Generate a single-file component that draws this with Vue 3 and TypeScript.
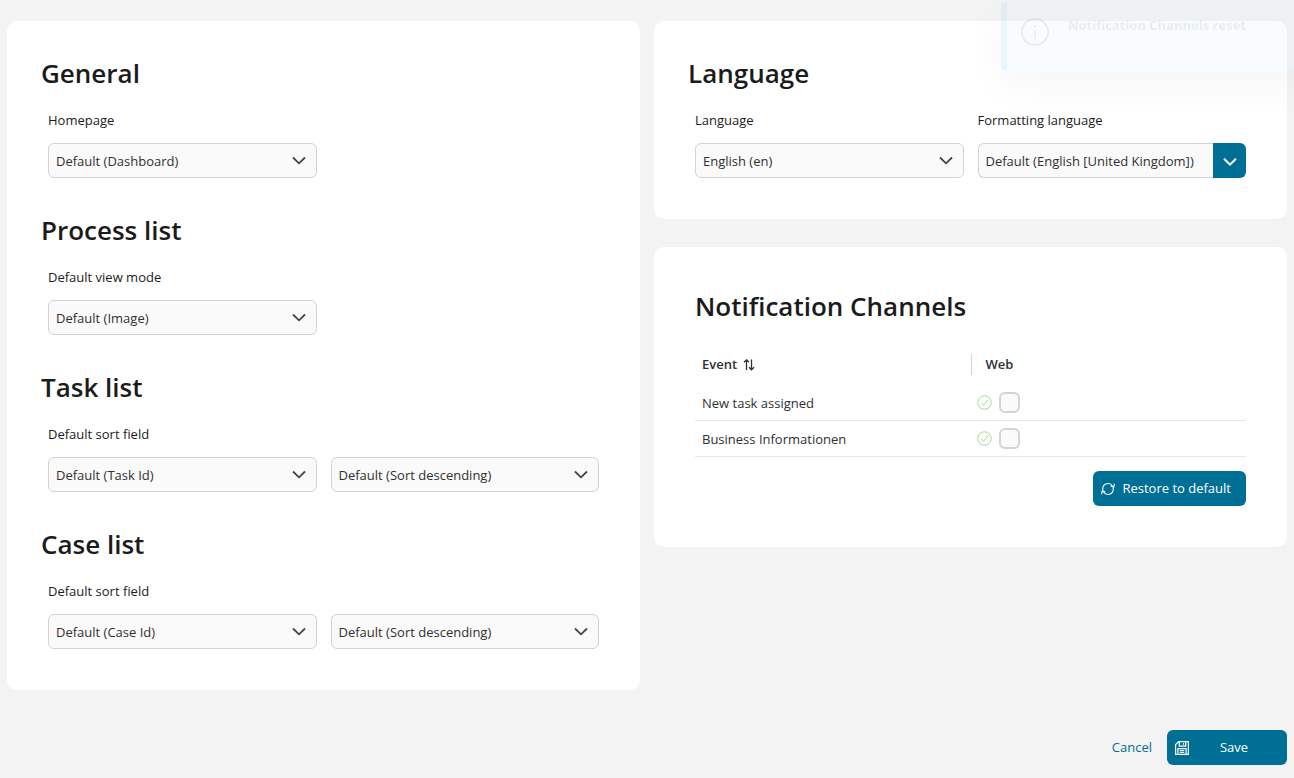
<script setup lang="ts">
import { ref } from 'vue'

interface Field {
  id: string
  label: string
  value: string
}
interface Section {
  title: string
  label: string
  fields: Field[]
}
interface Channel {
  id: string
  event: string
  web: boolean
}

const sections = ref<Section[]>([
  {
    title: 'General',
    label: 'Homepage',
    fields: [{ id: 'homepage', label: 'Homepage', value: 'Default (Dashboard)' }],
  },
  {
    title: 'Process list',
    label: 'Default view mode',
    fields: [{ id: 'view-mode', label: 'Default view mode', value: 'Default (Image)' }],
  },
  {
    title: 'Task list',
    label: 'Default sort field',
    fields: [
      { id: 'task-sort', label: 'Default sort field', value: 'Default (Task Id)' },
      { id: 'task-dir', label: 'Task sort direction', value: 'Default (Sort descending)' },
    ],
  },
  {
    title: 'Case list',
    label: 'Default sort field',
    fields: [
      { id: 'case-sort', label: 'Default sort field', value: 'Default (Case Id)' },
      { id: 'case-dir', label: 'Case sort direction', value: 'Default (Sort descending)' },
    ],
  },
])

const language = ref('English (en)')
const formatting = ref('Default (English [United Kingdom])')
const channels = ref<Channel[]>([
  { id: 'new-task', event: 'New task assigned', web: false },
  { id: 'business', event: 'Business Informationen', web: false },
])

function restore(): void {
  channels.value.forEach((c) => (c.web = false))
}
</script>

<template>
  <form class="page" @submit.prevent>
    <div class="columns">
      <main class="card">
        <section v-for="s in sections" :key="s.title" class="section">
          <h2>{{ s.title }}</h2>
          <div class="fields">
            <label class="label" :for="s.fields[0].id">{{ s.label }}</label>
            <div v-for="f in s.fields" :key="f.id" class="select">
              <select :id="f.id" v-model="f.value" :aria-label="f.label">
                <option>{{ f.value }}</option>
              </select>
              <svg class="chevron" viewBox="0 0 14 14" aria-hidden="true"><path d="M1 3.500 7 9.300l6-5.800" /></svg>
            </div>
          </div>
        </section>
      </main>

      <div class="side">
        <section class="card">
          <h2>Language</h2>
          <div class="fields">
            <label class="label" for="language">Language</label>
            <label class="label" for="formatting">Formatting language</label>
            <div class="select">
              <select id="language" v-model="language">
                <option>English (en)</option>
              </select>
              <svg class="chevron" viewBox="0 0 14 14" aria-hidden="true"><path d="M1 3.500 7 9.300l6-5.800" /></svg>
            </div>
            <div class="combo">
              <input id="formatting" v-model="formatting" type="text" />
              <button type="button" aria-label="Show formatting languages">
                <svg class="icon" viewBox="0 0 14 14" aria-hidden="true"><path d="M1 4.800 7 10.600l6-5.800" stroke-width="2" /></svg>
              </button>
            </div>
          </div>
        </section>

        <section class="card channels">
          <h2>Notification Channels</h2>
          <table>
            <thead>
              <tr>
                <th scope="col">
                  <span class="sort">Event
                    <svg class="icon" viewBox="0 0 14 14" aria-hidden="true"><path d="M4.500 12V2M2 4.300 4.500 1.800 7 4.300M9.500 1.500v10.200M7 9.300l2.500 2.500 2.500-2.500" stroke-width="1.300" /></svg>
                  </span>
                </th>
                <th scope="col"><span class="divided">Web</span></th>
              </tr>
            </thead>
            <tbody>
              <tr v-for="c in channels" :key="c.id">
                <td><label :for="c.id">{{ c.event }}</label></td>
                <td class="web">
                  <div class="state">
                    <svg class="ok" viewBox="0 0 16 16" aria-hidden="true"><circle cx="8" cy="8" r="7.200" /><path d="m4.500 8.600 2.400 2.400 4.900-6" /></svg>
                    <input :id="c.id" v-model="c.web" type="checkbox" />
                  </div>
                </td>
              </tr>
            </tbody>
          </table>
          <div class="actions">
            <button class="primary" type="button" @click="restore">
              <svg class="icon" viewBox="0 0 14 14" aria-hidden="true"><path d="M1.800 9.500V7A5.200 5.200 0 0 1 11.500 4.200M12.200 4.500V7A5.200 5.200 0 0 1 2.500 9.800M13.300 1.700 12.900 4.800 9.800 4.300M.7 12.300l.4-3.100 3.100.5" stroke-width="1.100" /></svg>
              <span>Restore to default</span>
            </button>
          </div>
        </section>
      </div>
    </div>

    <footer class="footer">
      <a href="#">Cancel</a>
      <button class="primary save" type="submit">
        <svg class="icon" viewBox="0 0 14 14" aria-hidden="true"><path d="M.6 3.600 3.600.6h9.800v12.800H.6zM4.300.8v4.400h6.400V.8M8.500 2v1.800M2.900 13.200V7.700h8.200v5.500M4.800 9.600h4.400M4.800 11.500h4.400" stroke-width="1.200" /></svg>
        <span>Save</span>
      </button>
    </footer>

    <div class="toast" role="status">
      <svg viewBox="0 0 28 28" aria-hidden="true"><circle cx="14" cy="14" r="13" /><path d="M14 12v9M14 7v2.200" /></svg>
      <strong>Notification Channels reset</strong>
    </div>
  </form>
</template>

<style>
body {
  background: #f3f3f3;
}
</style>

<style scoped>
* {
  box-sizing: border-box;
}
.page {
  padding: 21px 7px 13px;
  font: 13px/19px 'Open Sans', 'Noto Sans', sans-serif;
  color: #1b1b1b;
}
.columns {
  display: grid;
  grid-template-columns: 1fr 1fr;
  gap: 14px;
  align-items: start;
}
.side {
  display: grid;
  gap: 28px;
}
.card {
  padding: 34px 34px 41px;
  background: #fff;
  border-radius: 10px;
}
.card.channels {
  padding: 41px;
}
h2 {
  margin: 0;
  font-size: 26px;
  line-height: 37px;
  font-weight: 600;
}
.section + .section {
  margin-top: 34px;
}
.fields {
  display: grid;
  grid-template-columns: 1fr 1fr;
  column-gap: 14px;
  row-gap: 13px;
  padding: 19px 7px 0;
}
.section .label {
  grid-column: 1 / -1;
}
.select {
  display: grid;
  align-items: center;
}
select,
.combo input {
  width: 100%;
  height: 35px;
  padding: 1px 7px 0;
  appearance: none;
  border: 1px solid #d3d3d6;
  border-radius: 6px;
  background: #fafafa;
  color: #303030;
  font: inherit;
}
.select > * {
  grid-area: 1 / 1;
}
svg {
  fill: none;
  stroke: currentColor;
}
.icon,
.chevron {
  width: 14px;
  height: 14px;
  flex: none;
}
.chevron {
  justify-self: end;
  margin-right: 11px;
  color: #444;
  stroke-width: 1.8;
  pointer-events: none;
}
.combo {
  display: flex;
}
.combo input {
  flex: 1;
  min-width: 0;
  border-right: 0;
  border-radius: 6px 0 0 6px;
}
.combo button {
  display: grid;
  place-items: center;
  width: 33px;
  padding: 0;
  border: 0;
  border-radius: 0 6px 6px 0;
  background: #006f95;
  color: #fff;
}
table {
  width: 100%;
  margin-top: 19px;
  table-layout: fixed;
  border-collapse: separate;
  border-spacing: 0;
}
th {
  height: 41px;
  padding: 0;
  text-align: left;
  font-weight: 600;
  color: #303030;
}
.sort {
  display: flex;
  align-items: center;
  gap: 5px;
  padding-left: 7px;
}
.divided {
  display: block;
  padding-left: 14px;
  border-left: 1px solid #d3d3d6;
  line-height: 21px;
}
td {
  height: 36px;
  padding: 1px 7px 0;
  border-bottom: 1px solid #e6e6e6;
  color: #303030;
}
td.web {
  padding: 0 6px;
}
.state {
  display: flex;
  align-items: center;
  gap: 7px;
}
.ok {
  width: 15px;
  height: 15px;
  color: #9bdc84;
}
.state input {
  width: 21px;
  height: 21px;
  margin: 0;
  appearance: none;
  border: 2px solid #d3d3d9;
  border-radius: 6px;
  background: #fafafa;
}
.state input:checked {
  background: #006f95;
}
.actions {
  display: flex;
  justify-content: flex-end;
  margin-top: 14px;
}
.primary {
  display: flex;
  align-items: center;
  gap: 7px;
  height: 35px;
  padding: 0 15px 0 8px;
  border: 0;
  border-radius: 6px;
  background: #006f95;
  color: #fff;
  font: inherit;
}
.save {
  width: 120px;
}
.save span {
  flex: 1;
  text-align: center;
}
.footer {
  display: flex;
  justify-content: flex-end;
  align-items: center;
  gap: 15px;
  margin-top: 40px;
}
.footer a {
  color: #006f95;
  text-decoration: none;
}
.toast {
  position: fixed;
  top: 1px;
  right: -27px;
  display: flex;
  gap: 19px;
  width: 320px;
  height: 70px;
  padding: 15px 14px;
  border-left: 6px solid rgba(120, 200, 245, 0.16);
  border-radius: 6px;
  background: rgba(190, 228, 255, 0.11);
  background-clip: padding-box;
  box-shadow: 0 14px 42px rgba(0, 0, 0, 0.04);
  color: rgba(40, 50, 55, 0.08);
  pointer-events: none;
}
.toast svg {
  width: 28px;
  height: 28px;
  margin-top: 2px;
  flex: none;
  stroke-width: 2;
}
</style>
